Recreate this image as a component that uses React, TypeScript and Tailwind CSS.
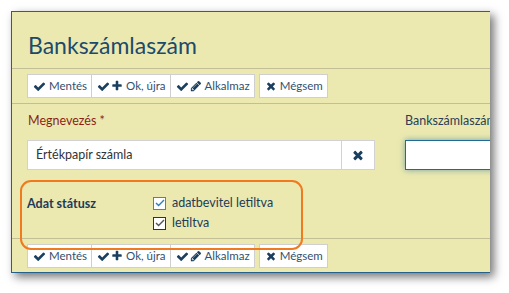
import React from 'react';

const font = { fontFamily: 'Lato, "Open Sans", sans-serif' };

// Font Awesome 4 glyphs, drawn inline
const CheckIcon = ({ size = 13 }: { size?: number }) => (
  <svg width={size} height={size} viewBox="0 0 1792 1792" fill="currentColor">
    <path d="M1671 566q0 40-28 68l-724 724-136 136q-28 28-68 28t-68-28l-136-136-362-362q-28-28-28-68t28-68l136-136q28-28 68-28t68 28l294 295 656-657q28-28 68-28t68 28l136 136q28 28 28 68z" />
  </svg>
);

const PlusIcon = ({ size = 12 }: { size?: number }) => (
  <svg width={size} height={size} viewBox="0 0 1792 1792" fill="currentColor">
    <path d="M1600 736v192q0 40-28 68t-68 28h-416v416q0 40-28 68t-68 28h-192q-40 0-68-28t-28-68v-416h-416q-40 0-68-28t-28-68v-192q0-40 28-68t68-28h416v-416q0-40 28-68t68-28h192q40 0 68 28t28 68v416h416q40 0 68 28t28 68z" />
  </svg>
);

const TimesIcon = ({ size = 13 }: { size?: number }) => (
  <svg width={size} height={size} viewBox="0 0 1792 1792" fill="currentColor">
    <path d="M1490 1322q0 40-28 68l-136 136q-28 28-68 28t-68-28l-294-294-294 294q-28 28-68 28t-68-28l-136-136q-28-28-28-68t28-68l294-294-294-294q-28-28-28-68t28-68l136-136q28-28 68-28t68 28l294 294 294-294q28-28 68-28t68 28l136 136q28 28 28 68t-28 68l-294 294 294 294q28 28 28 68z" />
  </svg>
);

const PencilIcon = ({ size = 12 }: { size?: number }) => (
  <svg width={size} height={size} viewBox="0 0 1792 1792" fill="currentColor">
    <path d="M491 1536l91-91-235-235-91 91v107h128v128h107zm523-928q0-22-22-22-10 0-17 7l-542 542q-7 7-7 17 0 22 22 22 10 0 17-7l542-542q7-7 7-17zm-54-192l416 416-832 832h-416v-416zm683 96q0 53-37 90l-166 166-416-416 166-165q36-38 90-38 53 0 91 38l235 234q37 39 37 91z" />
  </svg>
);

const ToolButton = ({ icons, label, className = '' }: { icons: React.ReactNode; label: string; className?: string }) => (
  <button className={`flex h-[24px] items-center gap-[3px] border border-[#cfcfcf] bg-white pl-[5px] pr-[4px] text-[11.5px] text-[#33506e] ${className}`}>
    <span className="flex items-center gap-[1px] text-[#1b3f5e]">{icons}</span>
    {label}
  </button>
);

const Toolbar = () => (
  <div className="flex items-center">
    <ToolButton icons={<CheckIcon />} label="Mentés" />
    <ToolButton className="-ml-px" icons={<><CheckIcon /><PlusIcon /></>} label="Ok, újra" />
    <ToolButton className="-ml-px" icons={<><CheckIcon /><PencilIcon /></>} label="Alkalmaz" />
    <ToolButton className="ml-[4px]" icons={<TimesIcon size={12} />} label="Mégsem" />
  </div>
);

const Checkbox = ({ active, label }: { active?: boolean; label: string }) => (
  <label className="flex h-[20px] items-center gap-[6px] text-[12.5px] text-[#1d3b57]">
    <span
      className={`flex h-[13px] w-[13px] items-center justify-center border bg-white ${active ? 'border-[#3a88c8]' : 'border-[#333]'}`}
    >
      <svg width="10" height="8" viewBox="0 0 10 8" fill="none">
        <path d="M1 4l2.6 2.6L9 1" stroke={active ? '#2f7fc0' : '#555'} strokeWidth="1.4" />
      </svg>
    </span>
    {label}
  </label>
);

export default function App() {
  return (
    <div className="h-[293px] w-[509px] bg-white pl-[11px] pt-[11px]" style={font}>
      <div className="relative w-[479px] overflow-hidden border-b border-l border-t border-[#25618c] bg-[#ebe9b0] shadow-[4px_4px_9px_rgba(0,0,0,0.55)]">
        <div className="border-b border-[#c2bf97] pb-[10px] pl-[16px] pt-[20px]">
          <h1 className="text-[23px] leading-[26px] text-[#1d4a6b]">Bankszámlaszám</h1>
        </div>
        <div className="border-b border-[#c2bf97] py-[5px] pl-[15px]">
          <Toolbar />
        </div>
        <div className="flex gap-[30px] pl-[15px] pt-[8px]">
          <div className="shrink-0">
            <div className="pl-[1px] text-[12.5px] leading-[18px] text-[#8c1f16]">Megnevezés *</div>
            <div className="mt-[10px] flex h-[30px]">
              <div className="flex w-[315px] items-center border border-[#d2d2d2] bg-white pl-[8px] text-[12.5px] text-[#333]">
                Értékpapír számla
              </div>
              <div className="-ml-px flex w-[34px] items-center justify-center border border-[#d2d2d2] bg-white text-[#1b3f5e]">
                <TimesIcon size={14} />
              </div>
            </div>
          </div>
          <div className="shrink-0">
            <div className="text-[12.5px] leading-[18px] text-[#2c3e55]">Bankszámlaszám</div>
            <div className="mt-[10px] h-[30px] w-[200px] border border-[#1f6a9a] bg-white shadow-[0_0_6px_rgba(40,110,150,0.6)]" />
          </div>
        </div>
        <div className="mt-[23px] flex border-b border-[#c2bf97] pb-[5px] pl-[15px]">
          <div className="w-[126px] pt-[1px] text-[12.5px] font-bold leading-[20px] text-[#1d3b57]">Adat státusz</div>
          <div className="flex flex-col">
            <Checkbox active label="adatbevitel letiltva" />
            <Checkbox label="letiltva" />
          </div>
        </div>
        <div className="pb-[4px] pl-[15px] pt-[5px]">
          <Toolbar />
        </div>
        <div className="absolute left-[8px] top-[168px] h-[70px] w-[283px] rounded-[11px] border-2 border-[#f07a1f]" />
      </div>
    </div>
  );
}
